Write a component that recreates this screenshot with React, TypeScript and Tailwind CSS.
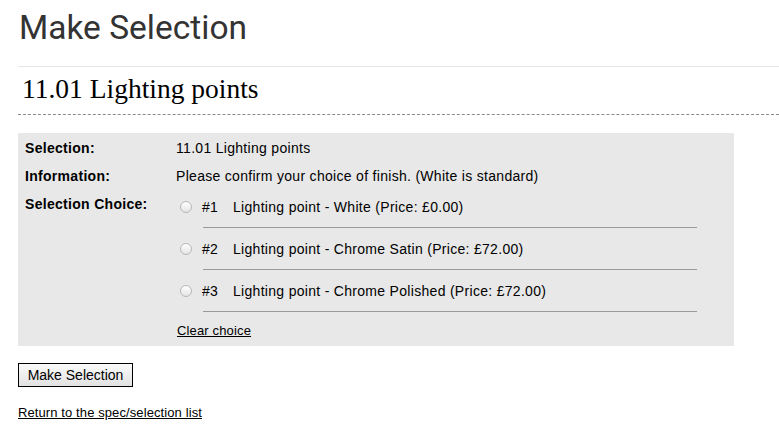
const OPTIONS = [
  { num: "#1", label: "Lighting point - White (Price: £0.00)" },
  { num: "#2", label: "Lighting point - Chrome Satin (Price: £72.00)" },
  { num: "#3", label: "Lighting point - Chrome Polished (Price: £72.00)" },
];

const Radio = () => (
  <span className="ml-[4px] h-[12px] w-[12px] shrink-0 rounded-full border border-[#b8b8b8] bg-gradient-to-b from-white to-[#e4e4e4]" />
);

export default function App() {
  return (
    <div className="min-h-screen bg-white pl-[18px] font-['Liberation_Sans',Arial,sans-serif] text-[14px] text-black">
      <h1 className="pt-[8px] pl-px font-['Roboto',sans-serif] text-[33.5px] leading-[40px] text-[#333]">
        Make Selection
      </h1>

      <div className="mt-[18px] border-t border-[#e6e6e6]">
        <h2 className="border-b border-dashed border-[#8a8a8a] pt-[6px] pb-[9px] pl-[4px] font-['Liberation_Serif','Times_New_Roman',serif] text-[27.5px] leading-[32px]">
          11.01 Lighting points
        </h2>
      </div>

      <div className="mt-[18px] h-[213px] w-[716px] bg-[#e8e8e8] pt-[5px] pl-[7px] tracking-[0.3px]">
        <div className="grid grid-cols-[151px_1fr] gap-y-[8px] leading-[20px]">
          <div className="font-bold">Selection:</div>
          <div>11.01 Lighting points</div>

          <div className="font-bold">Information:</div>
          <div>Please confirm your choice of finish. (White is standard)</div>

          <div className="font-bold">Selection Choice:</div>
          <div className="pt-[3px]">
            {OPTIONS.map((opt) => (
              <div key={opt.num} className="mb-[11px]">
                <div className="flex h-[20px] items-center">
                  <Radio />
                  <span className="ml-[10px] w-[31px]">{opt.num}</span>
                  <span>{opt.label}</span>
                </div>
                <div className="mt-[10px] ml-[27px] h-px w-[494px] bg-[#9a9a9a]" />
              </div>
            ))}
            <a href="#" className="ml-px block text-[13px] leading-[16px] tracking-[0.15px] text-black underline">
              Clear choice
            </a>
          </div>
        </div>
      </div>

      <button className="mt-[17px] h-[24px] w-[115px] border border-black bg-gradient-to-b from-[#fafafa] to-[#e2e2e2] text-[14px] leading-[20px] text-black">
        Make Selection
      </button>

      <div className="mt-[15px]">
        <a href="#" className="text-[13px] leading-[16px] tracking-[0.1px] text-black underline">
          Return to the spec/selection list
        </a>
      </div>
    </div>
  );
}
